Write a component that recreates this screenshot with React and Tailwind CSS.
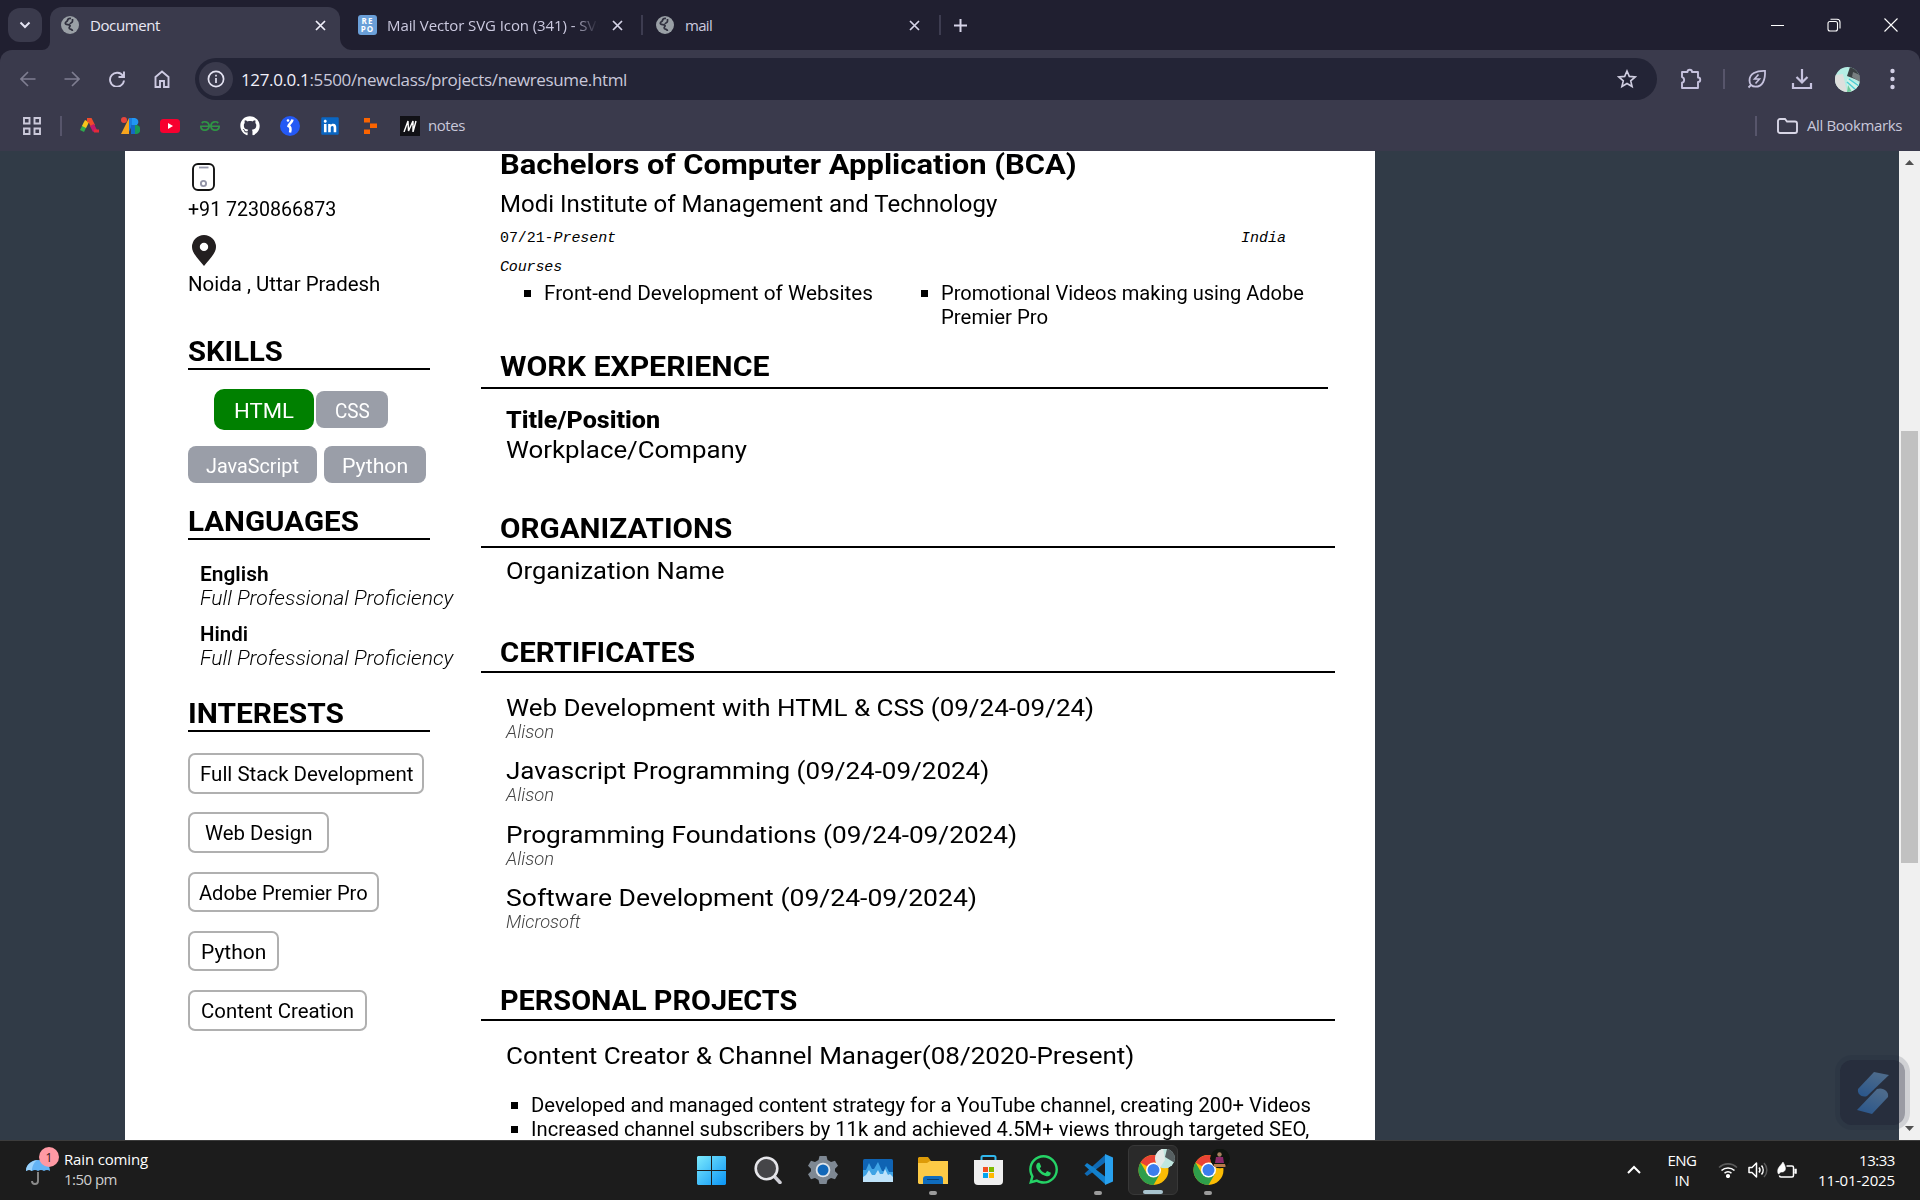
import { useLayoutEffect, useRef, useState } from "react";
import { FaGithub, FaWhatsapp, FaLinkedin } from "react-icons/fa";
import { SiGeeksforgeeks } from "react-icons/si";

/* Text tracked so that it fills a given width. */
function Fit({ w, children, className = "" }) {
  const ref = useRef(null);
  const [ls, setLs] = useState(0);
  useLayoutEffect(() => {
    const el = ref.current;
    const n = el.textContent.length;
    setLs((w - el.getBoundingClientRect().width) / n);
  }, [w]);
  return (
    <span ref={ref} className={"inline-block whitespace-pre " + className} style={{ letterSpacing: ls + "px" }}>
      {children}
    </span>
  );
}

/* Text whose letters are widened so that it fills a given width. */
function Wide({ w, children }) {
  const ref = useRef(null);
  const [sx, setSx] = useState(1);
  useLayoutEffect(() => {
    setSx(w / ref.current.offsetWidth);
  }, [w]);
  return (
    <span className="inline-block whitespace-pre" style={{ width: w + "px" }}>
      <span ref={ref} className="inline-block origin-left" style={{ transform: "scaleX(" + sx + ")" }}>{children}</span>
    </span>
  );
}

function Globe() {
  return (
    <svg className="size-[18px] shrink-0" viewBox="0 0 18 18">
      <circle cx="9" cy="9" r="9" fill="#9aa0a6" />
      <path d="M10 2.500c-2.500-.3-3.300.9-3.500 2C6.200 6 4.300 5.700 4.300 7.200c0 2 3.700.8 4.700 2 .9 1.200-1.600 1.700-.7 3.200.7 1 3 .5 3.200 2.600M11.500 3v2.300c0 1.500-2.500 1.200-2.300 2.700" fill="none" stroke="#30303f" strokeWidth="1.700" />
    </svg>
  );
}

function Cross({ color = "#d6d4e8" }) {
  return (
    <svg className="size-[11px] shrink-0" viewBox="0 0 11 11" stroke={color} strokeWidth="1.700">
      <path d="M1 1l9 9M10 1l-9 9" />
    </svg>
  );
}

function TabBar() {
  return (
    <header className="flex h-[50px] bg-[#201f30] pl-2">
      <div className="mt-2 flex h-[34px] w-[34px] items-center justify-center rounded-xl bg-[#3a3a4c]">
        <svg className="size-3" viewBox="0 0 12 12" fill="none" stroke="#e4e3f2" strokeWidth="2"><path d="M1.500 3.500L6 8l4.500-4.500" /></svg>
      </div>
      <div className="flex w-2 items-end overflow-hidden bg-[#3a3a4c]"><div className="h-full w-full rounded-br-xl bg-[#201f30]" /></div>
      <div className="mt-[7px] flex h-[43px] w-[290px] items-center rounded-t-xl bg-[#3a3a4c] pr-[14px] pl-[11px] pb-[7px]">
        <Globe />
        <Fit w={70} className="ml-[11px] text-[15px] text-[#e9e8f4]">Document</Fit>
        <div className="ml-auto flex"><Cross color="#f0effa" /></div>
      </div>
      <div className="w-3 bg-[#3a3a4c]"><div className="h-full w-full rounded-bl-xl bg-[#201f30]" /></div>
      <div className="flex w-[289px] items-center pl-[6px]">
        <div className="flex h-5 w-[19px] flex-col items-center justify-center rounded-[3px] bg-[#6a9fd8] text-[8px] leading-[8px] font-bold tracking-[1px] text-white"><span>RE</span><span>PO</span></div>
        <div className="ml-[10px] h-6 w-[211px] overflow-hidden [mask-image:linear-gradient(to_right,black_88%,transparent)]">
          <Fit w={220} className="text-[15px] leading-6 text-[#cbc9df]">Mail Vector SVG Icon (341) - SVG</Fit>
        </div>
        <div className="ml-[14px]"><Cross /></div>
      </div>
      <div className="mt-[15px] h-5 w-0.5 bg-[#3d3c50]" />
      <div className="flex w-[296px] items-center pr-[19px] pl-[13px]">
        <Globe />
        <Fit w={27} className="ml-[11px] text-[15px] text-[#cbc9df]">mail</Fit>
        <div className="ml-auto"><Cross /></div>
      </div>
      <div className="mt-[15px] h-5 w-0.5 bg-[#3d3c50]" />
      <div className="flex items-center pl-[13px]">
        <svg className="size-[13px]" viewBox="0 0 13 13" stroke="#d6d4e8" strokeWidth="2"><path d="M6.500 0v13M0 6.500h13" /></svg>
      </div>
      <div className="ml-auto flex items-center gap-[43px] pr-[22px]">
        <div className="h-px w-[13px] bg-white" />
        <svg className="size-[14px]" viewBox="0 0 14 14" fill="none" stroke="#fff" strokeWidth="1.100"><rect x="1" y="3.500" width="9.500" height="9.500" rx="2" /><path d="M3.500 1.200h6.500a3 3 0 0 1 3 3v6.300" /></svg>
        <svg className="size-[14px]" viewBox="0 0 14 14" stroke="#fff" strokeWidth="1.100"><path d="M.5.500l13 13M13.500.500l-13 13" /></svg>
      </div>
    </header>
  );
}

function Toolbar() {
  return (
    <div className="flex h-[58px] items-center pl-5">
      <svg className="size-4" viewBox="0 0 16 16" fill="none" stroke="#7f7e91" strokeWidth="1.600"><path d="M15.500 8H1.500M8 1L1 8l7 7" /></svg>
      <svg className="ml-7 size-4" viewBox="0 0 16 16" fill="none" stroke="#7f7e91" strokeWidth="1.600"><path d="M.5 8h14M8 1l7 7-7 7" /></svg>
      <svg className="ml-[29px] size-4" viewBox="0 0 16 16" fill="none" stroke="#cecbe3" strokeWidth="1.900"><path d="M14 5A7 7 0 1 0 15 9.500M15 .5v5.500H9.500" /></svg>
      <svg className="ml-[29px] h-[18px] w-4" viewBox="0 0 16 18" fill="none" stroke="#cecbe3" strokeWidth="1.900"><path d="M1.500 7L8 1.500 14.500 7v10H10v-6H6v6H1.500z" /></svg>
      <div className="ml-[25px] flex h-[42px] w-[1462px] items-center rounded-full bg-[#232436] pr-[20px] pl-1">
        <div className="flex size-[34px] items-center justify-center rounded-full bg-[#3a3a4c]">
          <svg className="size-[18px]" viewBox="0 0 18 18" fill="none" stroke="#e4e3f2" strokeWidth="1.700"><circle cx="9" cy="9" r="7.600" /><path d="M9 8v5M9 4.800v1.800" /></svg>
        </div>
        <Fit w={386} className="ml-[8px] pt-px text-[17px] text-[#c9c8da]"><span className="text-[#f1f0fa]">127.0.0.1</span>:5500/newclass/projects/newresume.html</Fit>
        <svg className="ml-auto size-5" viewBox="0 0 20 20" fill="none" stroke="#cfcde0" strokeWidth="1.600"><path d="M10 2l2.300 5.400 5.900.5-4.500 3.900 1.400 5.700L10 14.500l-5.100 3 1.400-5.700L1.800 7.900l5.900-.5z" /></svg>
      </div>
      <svg className="ml-[23px] size-[22px]" viewBox="0 0 22 22" fill="none" stroke="#c6c2de" strokeWidth="1.900"><path d="M2 4h5.500a2 2 0 1 1 4.500 0H18v5.500a2.200 2.200 0 1 1 0 4.500v6H2v-5.300a2.900 2.900 0 0 0 0-5.600z" strokeLinejoin="round" /></svg>
      <div className="ml-[21px] h-5 w-0.5 bg-[#57556b]" />
      <svg className="ml-[22px] size-5" viewBox="0 0 20 20" fill="none" stroke="#c6c2de" strokeWidth="1.800"><path d="M18 1.800C9 1.500 2.500 5 2.500 11.500c0 2 .5 3.300 1.500 4.500 1.300 1.200 2.800 1.700 4.500 1.700C15.500 17.700 18.500 11 18 1.800zM4 16l-2.500 2.500" /><path d="M11.500 5.500L7.500 10h5l-4 4.500" strokeWidth="1.600" /></svg>
      <svg className="ml-[24px] size-[22px]" viewBox="0 0 22 22" fill="none" stroke="#c6c2de" strokeWidth="2.200"><path d="M11 1v13M5.500 9l5.500 5.500L16.500 9M2 15v5h18v-5" /></svg>
      <svg className="ml-[22px] size-[25px]" viewBox="0 0 25 25">
        <clipPath id="av"><circle cx="12.500" cy="12.500" r="12.500" /></clipPath>
        <g clipPath="url(#av)"><rect width="25" height="25" fill="#b5ede4" /><path d="M0 8l8-1 4 18H0z" fill="#dedfdd" /><path d="M15 0h10v14L12 9z" fill="#3a4043" /><path d="M18 5l7 3v7l-8-5z" fill="#777e80" /><path d="M12 12l13 5v8H12z" fill="#d0f2e7" /><path d="M14 12l10 7M12 15l9 8" stroke="#4bcdd5" strokeWidth="1.500" /><path d="M13 18l4 7h-5z" fill="#6fc79b" /></g>
      </svg>
      <svg className="ml-[30px] h-[22px] w-[5px]" viewBox="0 0 5 22" fill="#d3d0e6"><circle cx="2.500" cy="3" r="2.200" /><circle cx="2.500" cy="11" r="2.200" /><circle cx="2.500" cy="19" r="2.200" /></svg>
    </div>
  );
}

function Bookmarks() {
  return (
    <div className="flex h-[43px] items-center pb-[8px] pl-[23px]">
      <svg className="size-[18px]" viewBox="0 0 18 18" fill="none" stroke="#cbc9da" strokeWidth="1.900"><path d="M1 1h5.500v5.500H1zM11.500 1H17v5.500h-5.500zM1 11.500h5.500V17H1zM11.500 11.500H17V17h-5.500z" /></svg>
      <div className="ml-[19px] h-5 w-0.5 bg-[#57556b]" />
      <svg className="ml-[18px] h-4 w-5" viewBox="0 0 20 16" fill="none" strokeWidth="4.500"><path d="M2 13l4-8" stroke="#2faa4e" /><path d="M4 9l3-6" stroke="#f8c21c" /><path d="M7 2h3l3 6" stroke="#ee4b2b" /><path d="M12 7l3 6" stroke="#c2186b" /><path d="M14 13h5" stroke="#e42a38" strokeWidth="3" /></svg>
      <svg className="ml-[21px] h-[18px] w-[19px]" viewBox="0 0 19 18"><circle cx="3" cy="3" r="3" fill="#e8453c" /><path d="M8 1v16H0z" fill="#f7a51e" /><path d="M8 1h6l-6 14z" fill="#1c7de0" /><path d="M11 1h3a4 4 0 0 1 2 7h-5z" fill="#2196f3" /><path d="M10 8h5a4.500 4.500 0 0 1 0 9h-5z" fill="#199a57" /><path d="M10 8h4v9h-4z" fill="#1667c4" /></svg>
      <svg className="ml-5 h-[14px] w-5" viewBox="0 0 20 14"><rect width="20" height="14" rx="3.500" fill="#f7002f" /><path d="M8 4l5 3-5 3z" fill="#fff" /></svg>
      <SiGeeksforgeeks className="ml-5 size-5 text-[#2f9345]" />
      <FaGithub className="ml-5 size-5 text-white" />
      <svg className="ml-5 size-5" viewBox="0 0 20 20"><circle cx="10" cy="10" r="10" fill="#2459f5" /><circle cx="8" cy="4.500" r="1.300" fill="#fff" /><path d="M12.500 3.500C12 7 9 7.500 8.500 10c2.500 1 2.500 3 1.500 6.500" fill="none" stroke="#fff" strokeWidth="2.500" /></svg>
      <FaLinkedin className="ml-5 size-5 bg-[linear-gradient(#fff,#fff)] bg-[length:14px_14px] bg-center bg-no-repeat text-[#0a66c2]" />
      <svg className="ml-[24px] h-4 w-[13px]" viewBox="0 0 13 16" fill="#fb6400"><path d="M0 0h6v4.500H0zM6 5.500h7V10H6zM0 11.500h6V16H0z" /></svg>
      <div className="ml-[23px] flex size-5 items-center justify-center bg-[#111116]">
        <svg className="h-3 w-[14px]" viewBox="0 0 14 12" fill="none" stroke="#fff" strokeWidth="1.400"><path d="M1 12L5 1l.5 10L10 1v11L13 1" /></svg>
      </div>
      <Fit w={37} className="ml-2 text-[15px] text-[#c9c8da]">notes</Fit>
      <div className="ml-auto h-5 w-0.5 bg-[#57556b]" />
      <svg className="ml-5 h-4 w-[21px]" viewBox="0 0 21 16" fill="none" stroke="#d8d6e6" strokeWidth="1.900"><path d="M3 1h5l2 2.500h8a2 2 0 0 1 2 2V13a2 2 0 0 1-2 2H3a2 2 0 0 1-2-2V3a2 2 0 0 1 2-2z" /></svg>
      <Fit w={95} className="mr-[18px] ml-[9px] text-[15px] text-[#c9c8da]">All Bookmarks</Fit>
    </div>
  );
}

function SideHeading({ w, children, className }) {
  return <h2 className={"h-[35px] w-[242px] border-b-2 border-black text-[28px] leading-[34px] font-bold " + className}><Wide w={w}>{children}</Wide></h2>;
}

function Sidebar() {
  return (
    <aside className="w-[356px] shrink-0 pl-[63px]">
      <svg className="mt-3 ml-1 h-[28px] w-[23px]" viewBox="0 0 23 28" fill="none"><rect x="1" y="1" width="21" height="26" rx="5" stroke="#111" strokeWidth="1.900" /><path d="M7 4.500h9.500" stroke="#9395a8" strokeWidth="1.800" /><circle cx="11.500" cy="20.500" r="2.600" stroke="#9395a8" strokeWidth="1.900" /></svg>
      <p className="mt-[6px] h-6"><Wide w={148}>+91 7230866873</Wide></p>
      <svg className="mt-[14px] ml-1 h-[31px] w-6" viewBox="0 0 24 31" fill="#231f20"><path fillRule="evenodd" d="M12 0a12 12 0 0 1 12 12c0 6-7 13-12 19C7 25 0 18 0 12A12 12 0 0 1 12 0zm0 7.700a4.200 4.200 0 1 0 0 8.400 4.200 4.200 0 0 0 0-8.400z" /></svg>
      <p className="mt-1.5 h-6"><Wide w={192}>Noida , Uttar Pradesh</Wide></p>

      <SideHeading w={95} className="mt-[39px]">SKILLS</SideHeading>
      <div className="mt-[19px] flex items-center gap-0.5 pl-[26px] text-white">
        <div className="flex h-[41px] w-[100px] items-center justify-center rounded-[10px] bg-[#008000] pt-0.5 text-[21px]"><Wide w={60}>HTML</Wide></div>
        <div className="flex h-[37px] w-[72px] items-center justify-center rounded-lg bg-[#9a9ea8] pt-0.5"><Wide w={35}>CSS</Wide></div>
      </div>
      <div className="mt-4 flex gap-[7px] text-white">
        <div className="flex h-[37px] w-[129px] items-center justify-center rounded-lg bg-[#9a9ea8] pt-0.5"><Wide w={93}>JavaScript</Wide></div>
        <div className="flex h-[37px] w-[102px] items-center justify-center rounded-lg bg-[#9a9ea8] pt-0.5"><Wide w={66}>Python</Wide></div>
      </div>

      <SideHeading w={171} className="mt-[22px]">LANGUAGES</SideHeading>
      <div className="mt-[22px] pl-3">
        <p className="h-6 font-semibold"><Wide w={69}>English</Wide></p>
        <p className="h-6 font-light italic"><Wide w={253}>Full Professional Proficiency</Wide></p>
        <p className="mt-3 h-6 font-semibold"><Wide w={48}>Hindi</Wide></p>
        <p className="h-6 font-light italic"><Wide w={253}>Full Professional Proficiency</Wide></p>
      </div>

      <SideHeading w={156} className="mt-[27px]">INTERESTS</SideHeading>
      <div className="mt-[21px] flex flex-col gap-[19px] leading-[38px]">
        <div className="-mb-px h-[41px] w-[236px] rounded-[7px] border-2 border-[#b0b0b0] pl-[10px]"><Wide w={213}>Full Stack Development</Wide></div>
        <div className="h-[41px] w-[141px] rounded-[7px] border-2 border-[#b0b0b0] pl-[15px]"><Wide w={107}>Web Design</Wide></div>
        <div className="h-[40px] w-[191px] rounded-[7px] border-2 border-[#b0b0b0] pl-[9px]"><Wide w={169}>Adobe Premier Pro</Wide></div>
        <div className="h-[40px] w-[91px] rounded-[7px] border-2 border-[#b0b0b0] pl-[11px]"><Wide w={65}>Python</Wide></div>
        <div className="h-[41px] w-[179px] rounded-[7px] border-2 border-[#b0b0b0] pl-[11px]"><Wide w={153}>Content Creation</Wide></div>
      </div>
    </aside>
  );
}

function Heading({ w, children, className }) {
  return <h2 className={"border-b-2 border-black pl-[19px] text-[28px] leading-[34px] font-bold " + className}><Wide w={w}>{children}</Wide></h2>;
}

function Certificate({ title, w, by, bw, className }) {
  return (
    <div className={"pl-[25px] " + className}>
      <p className="h-7 text-[24px] leading-[30px]"><Wide w={w}>{title}</Wide></p>
      <p className="h-[22px] text-[18px] leading-[22px] font-light text-[#444] italic"><Wide w={bw}>{by}</Wide></p>
    </div>
  );
}

function Bullet({ w, children }) {
  return (
    <div className="flex h-6"><div className="mt-[9px] mr-[13px] size-[7px] bg-black" /><Wide w={w}>{children}</Wide></div>
  );
}

function Main() {
  return (
    <main className="w-[854px] shrink-0">
      <h3 className="-mt-[3px] h-[34px] pl-[19px] text-[28px] leading-[34px] font-bold"><Wide w={577}>Bachelors of Computer Application (BCA)</Wide></h3>
      <p className="mt-[9px] h-7 pl-[19px] text-[23px] leading-7"><Wide w={497}>Modi Institute of Management and Technology</Wide></p>
      <div className="mt-[10px] flex h-5 justify-between pr-[49px] pl-[19px] font-['Liberation_Mono',monospace] text-[15px] leading-5">
        <Fit w={116}>07/21-<i>Present</i></Fit>
        <Fit w={45} className="italic">India</Fit>
      </div>
      <p className="mt-[9px] h-5 pl-[19px] font-['Liberation_Mono',monospace] text-[15px] leading-5 italic"><Fit w={62}>Courses</Fit></p>
      <div className="mt-[3px] flex h-12 pl-[43px]">
        <div className="w-[397px]"><Bullet w={329}>Front-end Development of Websites</Bullet></div>
        <div>
          <Bullet w={363}>Promotional Videos making using Adobe</Bullet>
          <p className="h-6 pl-5"><Wide w={107}>Premier Pro</Wide></p>
        </div>
      </div>

      <Heading w={270} className="mt-[21px] h-[39px] w-[847px]">WORK EXPERIENCE</Heading>
      <p className="mt-[18px] h-7 pl-[25px] text-[23px] leading-7 font-extrabold"><Wide w={154}>Title/Position</Wide></p>
      <p className="h-[30px] pl-[25px] text-[24px] leading-[30px]"><Wide w={241}>Workplace/Company</Wide></p>

      <Heading w={232} className="mt-[47px] h-9">ORGANIZATIONS</Heading>
      <p className="mt-2 h-[30px] pl-[25px] text-[24px] leading-[30px]"><Wide w={219}>Organization Name</Wide></p>

      <Heading w={195} className="mt-[50px] h-[37px]">CERTIFICATES</Heading>
      <Certificate className="mt-5" title="Web Development with HTML & CSS (09/24-09/24)" w={588} by="Alison" bw={48} />
      <Certificate className="mt-[13px]" title="Javascript Programming (09/24-09/2024)" w={483} by="Alison" bw={48} />
      <Certificate className="mt-[14px]" title="Programming Foundations (09/24-09/2024)" w={511} by="Alison" bw={48} />
      <Certificate className="mt-[13px]" title="Software Development (09/24-09/2024)" w={471} by="Microsoft" bw={75} />

      <Heading w={297} className="mt-[51px] h-[37px]">PERSONAL PROJECTS</Heading>
      <p className="mt-5 h-[30px] pl-[25px] text-[24px] leading-[30px]"><Wide w={628}>Content Creator &amp; Channel Manager(08/2020-Present)</Wide></p>
      <div className="mt-[22px] pl-[30px]">
        <Bullet w={780}>Developed and managed content strategy for a YouTube channel, creating 200+ Videos</Bullet>
        <Bullet w={778}>Increased channel subscribers by 11k and achieved 4.5M+ views through targeted SEO,</Bullet>
      </div>
    </main>
  );
}

function Scrollbar() {
  return (
    <div className="flex w-[21px] flex-col items-center bg-[#f0f0f0]">
      <svg className="mt-[9px] h-[5px] w-[9px]" viewBox="0 0 9 5" fill="#505050"><path d="M0 5L4.500 0 9 5z" /></svg>
      <div className="mt-[266px] h-[432px] w-[17px] bg-[#c1c1c1]" />
      <svg className="mt-auto mb-[9px] h-[5px] w-[9px]" viewBox="0 0 9 5" fill="#505050"><path d="M0 0h9L4.500 5z" /></svg>
    </div>
  );
}

function Chrome({ children, id }) {
  return (
    <svg className="-mt-1 h-[37px] w-[37px] shrink-0 translate-x-[3px]" viewBox="0 0 37 37">
      <circle cx="15.500" cy="21" r="15" fill="#fbbc04" />
      <path d="M15.500 21L2.500 13.500A15 15 0 0 1 28.500 13.500H15.500z" fill="#ea4335" />
      <path d="M2.500 13.500A15 15 0 0 0 15.500 36l6.500-11.200-6.500-3.800-6.500 3.800z" fill="#2e9e4b" />
      <circle cx="15.500" cy="21" r="7.500" fill="#fff" /><circle cx="15.500" cy="21" r="6" fill="#3b7ded" />
      <clipPath id={id}><circle cx="27" cy="9.500" r="10" /></clipPath>
      <g clipPath={"url(#" + id + ")"}>{children}</g>
    </svg>
  );
}

function Taskbar() {
  return (
    <footer className="flex h-[60px] border-t border-[#3c3c3c] bg-[#1c1c1c] font-['Open_Sans','Noto_Sans',sans-serif] text-[15px] text-white">
      <div className="flex w-[684px] pl-[26px]">
        <svg className="mt-[5px] h-[40px] w-[33px]" viewBox="0 0 33 40">
          <path d="M12 26v9a3 3 0 0 1-6 0" fill="none" stroke="#8a8a8a" strokeWidth="1.900" />
          <path d="M0 25C0 18 6 14 12 14s12 4 12 11q-3-2-6 0-3-2-6 0-3-2-6 0-3-2-6 0z" fill="#63b3f5" /><path d="M6 25c0-6 3-10 6-11-5 0-12 4-12 11q3-2 6 0z" fill="#9ad2fb" />
          <circle cx="23" cy="11" r="10" fill="#ff99a4" /><text x="23" y="15.500" textAnchor="middle" fontSize="12" fill="#301518">1</text>
        </svg>
        <div className="mt-[8px] ml-[5px] flex flex-col leading-5">
          <Fit w={84}>Rain coming</Fit>
          <Fit w={53} className="self-start text-[#cfcfcf]">1:50 pm</Fit>
        </div>
      </div>
      <div className="grid grid-cols-[54px_60px_50px_60px_50px_60px_50px_60px_50px_60px] pt-1 [&>div]:flex [&>div]:h-[50px] [&>div]:flex-col [&>div]:items-center [&>div]:justify-between">
        <div className="pt-[11px]"><svg className="size-[29px]" viewBox="0 0 29 29"><defs><linearGradient id="w" x1="0" y1="0" x2="1" y2="1"><stop stopColor="#7ceafd" /><stop offset="1" stopColor="#0a94f5" /></linearGradient></defs><path d="M1 0h13v14H0V1zM15 0h13l1 1v13H15zM0 15h14v14H1l-1-1zM15 15h14v13l-1 1H15z" fill="url(#w)" /></svg></div>
        <div className="pt-[11px]"><svg className="size-[28px]" viewBox="0 0 28 28"><path d="M19 19l7 7.500" stroke="#cfcfd6" strokeWidth="3.500" strokeLinecap="round" /><circle cx="12.500" cy="12.500" r="10.800" fill="#454548" stroke="#e6e6ea" strokeWidth="2.600" /></svg></div>
        <div className="pt-[10px]"><svg className="h-[30px] w-[30px]" viewBox="0 0 30 30"><path d="M11.500 1h7l1 4 3.500 2 4-1.200 3 5-3 3v2.500l3 3-3 5-4-1.300-3.500 2-1 4h-7l-1-4-3.500-2-4 1.300-3-5 3-3v-2.500l-3-3 3-5 4 1.200 3.500-2z" fill="#7e8893" /><circle cx="15" cy="15" r="7.300" fill="#dfe4ea" /><circle cx="15" cy="15" r="5.500" fill="#1267b8" /></svg></div>
        <div className="pt-[14px]"><svg className="h-[23px] w-[30px]" viewBox="0 0 30 23"><rect width="30" height="23" rx="1.500" fill="#0f63b3" /><path d="M0 11h3l3-7 3 6h2l4-7 4 9h2l2-5 3 6h4v10H0z" fill="#3fa3e5" /><path d="M0 18l3-2 3-5 3 5 3 0 3-5 2 4 3 0 2-5 3 6 2-1 3 3v5H0z" fill="#bfe3fa" /></svg></div>
        <div className="pt-[12px]"><svg className="h-[27px] w-[30px]" viewBox="0 0 30 27"><path d="M1 0h9l3 4h17v8H0V1z" fill="#dd9b08" /><path d="M0 6h9l3-2h18v23H1l-1-1z" fill="#fcca46" /><path d="M5 27v-5a3 3 0 0 1 3-3h14a3 3 0 0 1 3 3v5z" fill="#0f6cbd" /><path d="M9 22.500h12" stroke="#083f70" /></svg><i className="h-1 w-2 rounded-full bg-[#9b9b9b]" /></div>
        <div className="pt-[10px]"><svg className="h-[30px] w-[29px]" viewBox="0 0 29 30"><path d="M7.500 6V2.500A1.500 1.500 0 0 1 9 1h11a1.500 1.500 0 0 1 1.500 1.500V6" fill="none" stroke="#31b8ee" strokeWidth="2" /><path d="M0 5h29v21a4 4 0 0 1-4 4H4a4 4 0 0 1-4-4z" fill="#efefef" /><path d="M9 12h5v5H9z" fill="#f25022" /><path d="M15 12h5v5h-5z" fill="#7fba00" /><path d="M9 18h5v5H9z" fill="#00a4ef" /><path d="M15 18h5v5h-5z" fill="#ffb900" /></svg></div>
        <div className="pt-[8px]"><FaWhatsapp className="size-[33px] text-[#25d366]" /></div>
        <div className="pt-[9px]"><svg className="size-[31px]" viewBox="0 0 31 31"><path d="M22 1L1.500 19.500 4 22l18-12z" fill="#0f6ab4" /><path d="M22 30L1.500 11.500 4 9l18 12z" fill="#1280cc" /><path d="M22 0l8 3.500v24L22 31z" fill="#28a1ee" /><path d="M22 8.500v14L13 15.500z" fill="#1c1c1c" /></svg><i className="h-1 w-2 rounded-full bg-[#9b9b9b]" /></div>
        <div className="rounded-md border border-[#383838] bg-[#2a2a2a] pt-[7px]"><Chrome id="c1"><circle cx="27" cy="9.500" r="10" fill="#bfe6df" /><path d="M17 3l8-4 2 12-6 9-6-9z" fill="#e4e9e7" /><path d="M29 0h8v14l-10-6z" fill="#565f61" /></Chrome><i className="h-1 w-5 rounded-full bg-[#a9c4cf]" /></div>
        <div className="pt-[8px]"><Chrome id="c2"><circle cx="27" cy="9.500" r="10" fill="#10150f" /><path d="M23 8h7l1 6h-9z" fill="#8b2a6a" /><path d="M21 15h11l1 3H20z" fill="#b8794a" /><circle cx="26.500" cy="5.500" r="2.200" fill="#a8805f" /></Chrome><i className="h-1 w-2 rounded-full bg-[#9b9b9b]" /></div>
      </div>
      <div className="ml-auto flex items-center pr-[25px] pb-0.5 leading-5">
        <svg className="h-[9px] w-[14px]" viewBox="0 0 14 9" fill="none" stroke="#fff" strokeWidth="2"><path d="M1 8l6-6 6 6" /></svg>
        <div className="ml-[26px] flex w-[30px] flex-col items-center"><Fit w={29}>ENG</Fit><Fit w={15}>IN</Fit></div>
        <svg className="ml-[21px] h-4 w-5" viewBox="0 0 20 16" fill="none" stroke="#fff" strokeWidth="1.600"><path d="M1 5.500a13 13 0 0 1 18 0" stroke="#5a5a5a" /><path d="M3.500 8.500a9.500 9.500 0 0 1 13 0M6.500 11.300a5 5 0 0 1 7 0" /><circle cx="10" cy="14" r="1.300" fill="#fff" /></svg>
        <svg className="ml-[10px] h-[18px] w-5" viewBox="0 0 20 18" fill="none" stroke="#fff" strokeWidth="1.500"><path d="M1 6.500h3L8.500 2v14L4 11.500H1z" strokeLinejoin="round" /><path d="M11 6.500a4 4 0 0 1 0 5M13.500 4.500a7 7 0 0 1 0 9" /><path d="M16 2a10 10 0 0 1 0 14" stroke="#5a5a5a" /></svg>
        <svg className="ml-[9px] h-[18px] w-5" viewBox="0 0 20 18" fill="none" stroke="#fff" strokeWidth="1.500"><path d="M9.500 5H15a1.500 1.500 0 0 1 1.500 1.500v8A1.500 1.500 0 0 1 15 16H4a1.500 1.500 0 0 1-1.500-1.500" /><path d="M17.500 8.500H19v3.500h-1.500" fill="#fff" /><path d="M1 12.500C-.5 7 3.500 5 6 1c2.500 4 4 8.500 0 10-2 0-3 0-4 2z" fill="#fff" strokeWidth=".5" /></svg>
        <div className="ml-[21px] flex flex-col items-end"><Fit w={36}>13:33</Fit><Fit w={77}>11-01-2025</Fit></div>
      </div>
    </footer>
  );
}

export default function App() {
  return (
    <div className="relative flex h-[1200px] w-[1920px] flex-col overflow-hidden font-['Open_Sans','Noto_Sans',sans-serif]">
      <TabBar />
      <div className="h-[101px] bg-[#201f30]">
        <div className="h-full rounded-t-xl bg-[#3a3a4c]">
          <Toolbar />
          <Bookmarks />
        </div>
      </div>
      <div className="flex h-[989px] overflow-hidden bg-[#313b47]">
        <div className="ml-[125px] flex h-full w-[1250px] overflow-hidden bg-white font-['Roboto',sans-serif] text-[20px] leading-6 text-black">
          <Sidebar />
          <Main />
        </div>
        <div className="grow" />
        <Scrollbar />
      </div>
      <Taskbar />
      <div className="absolute top-[1055px] left-[1835px] flex size-[75px] items-center justify-center rounded-[17px] border-[5px] border-[#1b1f36]/15 bg-[#191b30]/40 bg-clip-padding">
        <svg className="h-[42px] w-[32px]" viewBox="0 0 32 42">
          <defs><linearGradient id="s" x1="0" y1="1" x2="0.500" y2="0"><stop stopColor="#28558b" /><stop offset="1" stopColor="#4c6a8b" /></linearGradient></defs>
          <path d="M17 0l15 3L10 24C5 26 0 22 1 17z" fill="url(#s)" /><path d="M15 42L0 38 20 17c6-2 12 2 11 8z" fill="url(#s)" />
        </svg>
      </div>
    </div>
  );
}
